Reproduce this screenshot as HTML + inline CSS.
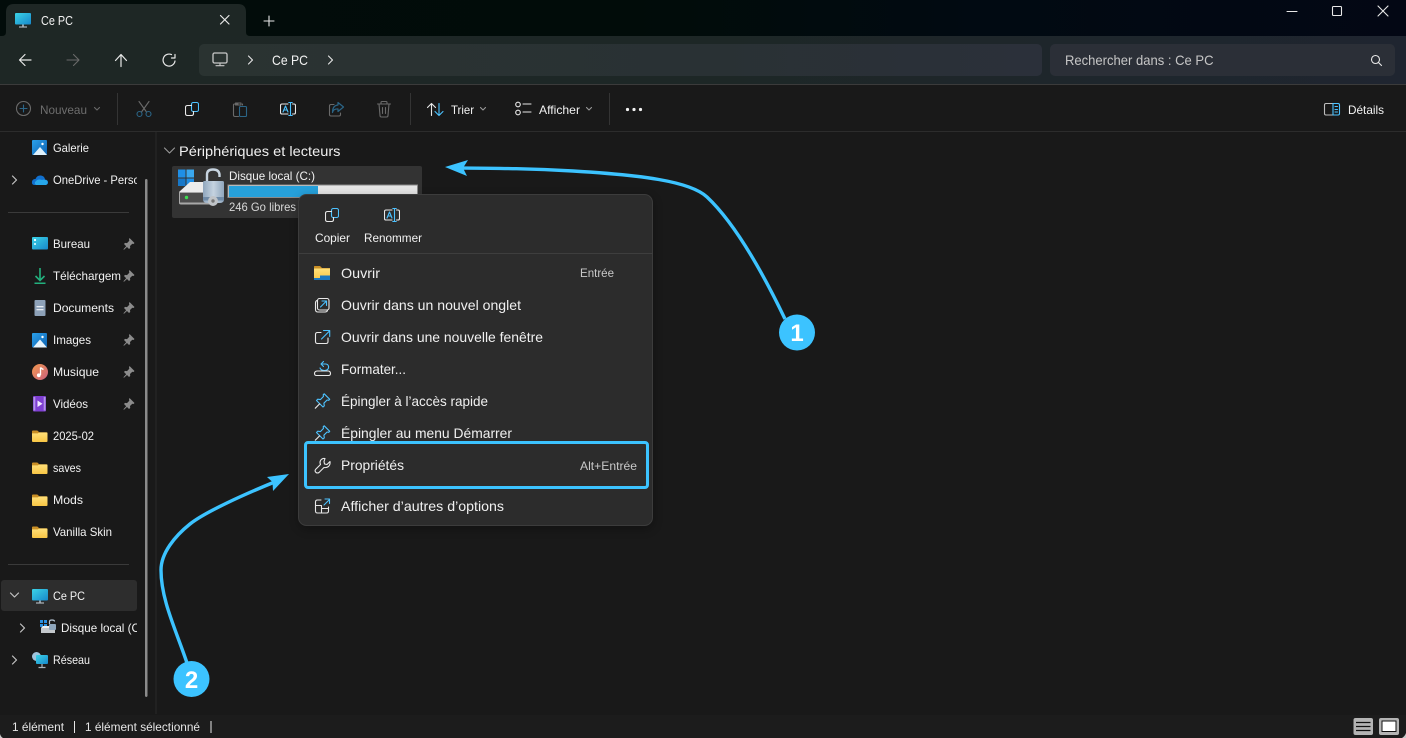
<!DOCTYPE html>
<html lang="fr"><head><meta charset="utf-8"><title>Ce PC</title>
<style>
html,body{margin:0;padding:0;background:#191919;width:1406px;height:738px;overflow:hidden}
svg{display:block}
text{font-family:"Liberation Sans",sans-serif;font-size:12px;fill:#f2f2f2}
.m{font-size:14px;fill:#f0f0f0}
.s{fill:#c9c9c9}
.i{fill:none;stroke:#e8e8e8;stroke-width:1.1;stroke-linecap:round;stroke-linejoin:round}
.b{fill:none;stroke:#4cc2ff;stroke-width:1.1;stroke-linecap:round;stroke-linejoin:round}
.d{fill:none;stroke:#6a6a6a;stroke-width:1.1;stroke-linecap:round;stroke-linejoin:round}
.db{fill:none;stroke:#2b6587;stroke-width:1.1;stroke-linecap:round;stroke-linejoin:round}
</style></head><body>
<svg xmlns="http://www.w3.org/2000/svg" width="1406" height="738" viewBox="0 0 1406 738">
<defs>
<linearGradient id="tb" x1="0" x2="1" y1="0" y2="0"><stop offset="0" stop-color="#020c0a"/><stop offset=".45" stop-color="#010c09"/><stop offset=".7" stop-color="#010a12"/><stop offset="1" stop-color="#030714"/></linearGradient>
<linearGradient id="nv" x1="0" x2="1" y1="0" y2="0"><stop offset="0" stop-color="#1e2725"/><stop offset=".5" stop-color="#1d2726"/><stop offset="1" stop-color="#1f2530"/></linearGradient>
<linearGradient id="ad" x1="0" x2="1" y1="0" y2="0"><stop offset="0" stop-color="#2a3331"/><stop offset=".6" stop-color="#293134"/><stop offset="1" stop-color="#2b303a"/></linearGradient>
<linearGradient id="scr" x1="0" x2="1" y1="0" y2="1"><stop offset="0" stop-color="#3bd3e6"/><stop offset="1" stop-color="#1788cc"/></linearGradient>
<linearGradient id="fo" x1="0" x2="0" y1="0" y2="1"><stop offset="0" stop-color="#ffe07a"/><stop offset="1" stop-color="#f8c544"/></linearGradient>
<linearGradient id="pic" x1="0" x2="1" y1="0" y2="1"><stop offset="0" stop-color="#2aa0ea"/><stop offset="1" stop-color="#0f62b0"/></linearGradient>
<linearGradient id="mus" x1="0" x2="1" y1="0" y2="1"><stop offset="0" stop-color="#f2994f"/><stop offset="1" stop-color="#c9607e"/></linearGradient>
<linearGradient id="lck" x1="0" x2="1" y1="0" y2="0"><stop offset="0" stop-color="#8fa6bd"/><stop offset=".5" stop-color="#c5d3e0"/><stop offset="1" stop-color="#8fa6bd"/></linearGradient>
<filter id="sh" x="-10%" y="-10%" width="120%" height="120%"><feGaussianBlur stdDeviation="5"/></filter>
<clipPath id="sc"><rect x="0" y="132" width="137" height="582"/></clipPath>
<symbol id="folder" viewBox="0 0 16 14" preserveAspectRatio="none">
<path d="M0 1.500Q0 .5 1 .5H5.500L7.500 2.500H15Q16 2.500 16 3.500V5H0Z" fill="#c98f26"/>
<path d="M0 3.800H6L7.500 2.800H15Q16 2.800 16 3.800V12.500Q16 13.500 15 13.500H1Q0 13.500 0 12.500Z" fill="url(#fo)"/>
</symbol>
<symbol id="pin" viewBox="0 0 12 12" width="12" height="12">
<path d="M6.500 0L11.500 5 10.500 6 9.300 5.700 7 8 7.200 10 6 11 4 9 1 11.800 .4 11.200 3.200 8.200 1 6 2 4.900 4 5.100 6.300 2.700 6 1.200Z" fill="#8c8c8c"/>
</symbol>
<symbol id="mon" viewBox="0 0 16 15" width="16" height="15">
<rect x="0" y="0" width="16" height="11.500" rx="1" fill="url(#scr)"/>
<rect x="7" y="11.500" width="2" height="2" fill="#8e9aa4"/>
<rect x="4" y="13.400" width="8" height="1.200" fill="#aeb6bc"/>
</symbol>
<symbol id="mpin" viewBox="0 0 16 16" width="16" height="16">
<path class="b" d="M9.700 .8L15.200 6.300 14.200 7.300 12.600 7 9.400 10.200 9.800 12.800 8.500 14 2 7.500 3.200 6.200 5.900 6.600 9 3.400 8.700 1.800Z"/>
<path class="i" d="M5.100 10.900L.8 15.200"/>
</symbol>
<symbol id="copy" viewBox="0 0 14 14" width="14" height="14">
<rect class="b" x="6.500" y=".5" width="7" height="9" rx="1.800"/>
<path class="i" d="M6.500 3.500H2.500Q.5 3.500 .5 5.500V11.500Q.5 13.500 2.500 13.500H6.500Q8.500 13.500 8.500 11.500V9.500"/>
</symbol>
<symbol id="ren" viewBox="0 0 16 14" width="16" height="14">
<path class="i" d="M8 2H2Q.5 2 .5 3.500V10.500Q.5 12 2 12H8M12.500 2H14Q15.500 2 15.500 3.500V10.500Q15.500 12 14 12H12.500"/>
<path class="b" d="M10.500 .5V13.500M8.800 .5H12.200M8.800 13.500H12.200"/>
<path class="b" d="M3 10L5.500 4 8 10M3.900 8H7.100"/>
</symbol>
</defs>

<!-- backgrounds -->
<rect width="1406" height="738" fill="#191919"/>
<rect width="1406" height="36" fill="url(#tb)"/>
<rect y="36" width="1406" height="48" fill="url(#nv)"/>
<rect y="84" width="1406" height="1" fill="#3b3b3b"/>
<rect y="131" width="1406" height="1" fill="#2c2c2c"/>
<rect x="155" y="132" width="2" height="582" fill="#212121"/>
<rect y="715" width="1406" height="23" fill="#1c1c1c"/>

<!-- tab -->
<path d="M0 36H2Q6 36 6 32V12Q6 4 14 4H238Q246 4 246 12V32Q246 36 250 36Z" fill="#1e2725"/>
<use href="#mon" x="15" y="13"/>
<text x="41" y="25" textLength="32" lengthAdjust="spacingAndGlyphs" style="font-size:13px">Ce PC</text>
<path class="i" style="stroke-width:1.200" d="M220.500 15.500L229 24M229 15.500L220.500 24"/>
<path class="i" d="M264 21H274M269 16V26"/>

<!-- window controls -->
<path d="M1287 11.500H1297" class="i"/>
<rect x="1332.500" y="6.500" width="9" height="9" rx="1" class="i"/>
<path class="i" d="M1378 6L1388 16M1388 6L1378 16"/>

<!-- nav -->
<path class="i" style="stroke-width:1.200" d="M31 60H20M25 54.500L19.500 60 25 65.500"/>
<path class="d" d="M67 60H78.500M73.500 54.500L79 60 73.500 65.500"/>
<path class="i" style="stroke-width:1.200" d="M121 66.500V55M115.500 60.500L121 54.500 126.500 60.500"/>
<path class="i" style="stroke-width:1.200" d="M171.500 54.600A6 6 0 1 0 175 61M175 54.500V58H171.500"/>
<rect x="199" y="44" width="843" height="32" rx="5" fill="url(#ad)"/>
<rect x="1050" y="44" width="345" height="32" rx="5" fill="#2b2f37"/>
<rect class="i" style="stroke:#c8c8c8;stroke-width:1.300" x="213" y="53" width="14" height="10" rx="1.500"/>
<path class="i" style="stroke:#c8c8c8" d="M220 63V65.500M216 65.700H224"/>
<path class="i" d="M248.500 56L252.500 60 248.500 64M328.500 56L332.500 60 328.500 64"/>
<text x="272" y="65" textLength="36" lengthAdjust="spacingAndGlyphs" style="font-size:14px">Ce PC</text>
<text x="1065" y="65" textLength="148.500" lengthAdjust="spacingAndGlyphs" style="font-size:14px;fill:#c6c6c6">Rechercher dans : Ce PC</text>
<circle class="i" cx="1375.500" cy="59.500" r="4"/><path class="i" d="M1378.500 62.500L1381.500 65.500"/>

<!-- toolbar -->
<circle class="d" cx="23.500" cy="108.500" r="7"/><path class="db" d="M23.500 105V112M20 108.500H27"/>
<text x="40" y="114" textLength="47" lengthAdjust="spacingAndGlyphs" style="fill:#6e6e6e">Nouveau</text>
<path class="d" d="M94.500 107.500L97 110 99.500 107.500"/>
<rect x="117" y="93" width="1" height="32" fill="#343434"/>
<path class="d" d="M139 101.500L146.500 112M149 101.500L141.500 112"/>
<circle class="db" cx="139.500" cy="114" r="2.500"/><circle class="db" cx="148.500" cy="114" r="2.500"/>
<use href="#copy" x="185" y="102"/>
<path class="d" d="M238 104H234.500Q233.500 104 233.500 105V115Q233.500 116.500 235 116.500H238.500M242.500 104V105M235.500 103H241V105H235.500Z"/>
<rect class="db" x="239.500" y="106.500" width="7" height="10" rx="1"/>
<use href="#ren" x="280" y="102"/>
<path class="d" d="M334 104.500H331Q329.500 104.500 329.500 106V114.500Q329.500 116 331 116H339Q340.500 116 340.500 114.500V113"/>
<path class="db" style="stroke-width:1.200" d="M338 102.500L343.500 107 338 111.500V109Q333.500 108.500 332.500 112.500 332.500 105.500 338 105Z"/>
<path class="d" d="M377.500 104H390.500M381 104V102.500Q381 101.500 382 101.500H386Q387 101.500 387 102.500V104M379 104L380 115.500Q380 117 381.500 117H386.500Q388 117 388 115.500L389 104M382.500 107.500V113.500M385.500 107.500V113.500"/>
<rect x="410" y="93" width="1" height="32" fill="#343434"/>
<path class="i" d="M431.500 115.500V103.500M427.500 107.500L431.500 103.500 435.500 107.500"/>
<path class="b" d="M439 103.500V115.500M435 111.500L439 115.500 443 111.500"/>
<text x="451" y="114" textLength="23" lengthAdjust="spacingAndGlyphs">Trier</text>
<path class="i" style="stroke:#9a9a9a" d="M480.500 107.500L483 110 485.500 107.500"/>
<circle class="i" cx="518" cy="104.500" r="2.300"/><circle class="i" cx="518" cy="112.500" r="2.300"/>
<path class="i" d="M523 104H531M523 112H531"/>
<text x="539" y="114" textLength="41" lengthAdjust="spacingAndGlyphs">Afficher</text>
<path class="i" style="stroke:#9a9a9a" d="M586.500 107.500L589 110 591.500 107.500"/>
<rect x="609" y="93" width="1" height="32" fill="#343434"/>
<circle cx="627.500" cy="109.500" r="1.600" fill="#f2f2f2"/><circle cx="634" cy="109.500" r="1.600" fill="#f2f2f2"/><circle cx="640.500" cy="109.500" r="1.600" fill="#f2f2f2"/>
<path class="i" style="stroke:#bdbdbd" d="M1333 103.500H1326Q1324.500 103.500 1324.500 105V113.500Q1324.500 115 1326 115H1333"/>
<path class="b" d="M1333 103.500H1338Q1339.500 103.500 1339.500 105V113.500Q1339.500 115 1338 115H1333ZM1335 106.500H1337.500M1335 109.500H1337.500M1335 112H1337.500"/>
<text x="1348" y="114" textLength="36" lengthAdjust="spacingAndGlyphs">Détails</text>

<!-- sidebar -->
<rect x="1" y="580" width="136" height="31" rx="3" fill="#2d2d2d"/>
<rect x="8" y="212" width="121" height="1" fill="#3a3a3a"/>
<rect x="8" y="564" width="121" height="1" fill="#3a3a3a"/>
<rect x="145" y="179" width="2.500" height="518" rx="1.200" fill="#8b8b8b"/>
<g clip-path="url(#sc)">
<text x="53" y="152" textLength="36" lengthAdjust="spacingAndGlyphs">Galerie</text>
<text x="53" y="184" textLength="108" lengthAdjust="spacingAndGlyphs">OneDrive - Personnel</text>
<text x="53" y="248" textLength="37" lengthAdjust="spacingAndGlyphs">Bureau</text>
<text x="53" y="280" textLength="68" lengthAdjust="spacingAndGlyphs">Téléchargem</text>
<text x="53" y="312" textLength="61" lengthAdjust="spacingAndGlyphs">Documents</text>
<text x="53" y="344" textLength="38" lengthAdjust="spacingAndGlyphs">Images</text>
<text x="53" y="376" textLength="46" lengthAdjust="spacingAndGlyphs">Musique</text>
<text x="53" y="408" textLength="35" lengthAdjust="spacingAndGlyphs">Vidéos</text>
<text x="53" y="440" textLength="41" lengthAdjust="spacingAndGlyphs">2025-02</text>
<text x="53" y="472" textLength="28" lengthAdjust="spacingAndGlyphs">saves</text>
<text x="53" y="504" textLength="30" lengthAdjust="spacingAndGlyphs">Mods</text>
<text x="53" y="536" textLength="59" lengthAdjust="spacingAndGlyphs">Vanilla Skin</text>
<text x="53" y="600" textLength="32" lengthAdjust="spacingAndGlyphs">Ce PC</text>
<text x="61" y="632" textLength="86" lengthAdjust="spacingAndGlyphs">Disque local (C:)</text>
<text x="53" y="664" textLength="37" lengthAdjust="spacingAndGlyphs">Réseau</text>
</g>
<use href="#pin" x="123" y="238"/><use href="#pin" x="123" y="270"/><use href="#pin" x="123" y="302"/><use href="#pin" x="123" y="334"/><use href="#pin" x="123" y="366"/><use href="#pin" x="123" y="398"/>
<path class="i" style="stroke:#c4c4c4;stroke-width:1.200" d="M12.500 176L16.500 180 12.500 184M20.500 624L24.500 628 20.500 632M12.500 656L16.500 660 12.500 664M10.500 593L14.500 597 18.500 593"/>
<!-- Galerie -->
<rect x="32" y="140" width="15" height="15" rx="1" fill="url(#pic)"/><path d="M33 155L40 147 47 155Z" fill="#dff1fb"/><circle cx="42.500" cy="144" r="1.200" fill="#fff"/>
<!-- OneDrive -->
<path d="M34 185Q31.500 184.500 32 181.500 32.500 179 35.500 179 37 175 41 175.500 44.500 176 45 179.500 48.500 180 48 183 47.500 185 45.500 185Z" fill="#1170cf"/><path d="M36 185Q33.500 183 36 181 38 178.500 42 180 44 179 47 180.500 49 183 46 185Z" fill="#28a8ea"/>
<!-- Bureau -->
<rect x="32" y="237" width="16" height="12.500" rx="1" fill="url(#scr)"/><rect x="34" y="239" width="2" height="2" fill="#e6fbff"/><rect x="34" y="243" width="2" height="2" fill="#bdf0f9"/>
<!-- Télécharg -->
<path d="M40 268V280M35.500 276L40 280.500 44.500 276" fill="none" stroke="#22b07d" stroke-width="1.600"/><rect x="34.500" y="282.500" width="11" height="1.500" fill="#22b07d"/>
<!-- Documents -->
<rect x="34.500" y="300" width="11" height="16" rx="1" fill="#8da1b8"/><rect x="36.500" y="306" width="7" height="1.300" fill="#e6ecf2"/><rect x="36.500" y="309" width="7" height="1.300" fill="#e6ecf2"/>
<!-- Images -->
<rect x="32" y="333" width="15" height="14.500" rx="1" fill="url(#pic)"/><path d="M33 347.500L40 339.500 47 347.500Z" fill="#e6f4fc"/><circle cx="42.500" cy="337" r="1.200" fill="#fff"/>
<!-- Musique -->
<circle cx="40" cy="372" r="8" fill="url(#mus)"/><path d="M40.500 367.500V375" stroke="#fff" stroke-width="1.300"/><path d="M40.500 367.500Q42 369 43.500 369.500" stroke="#fff" stroke-width="1.300" fill="none"/><circle cx="38.800" cy="375.300" r="1.900" fill="#fff"/>
<!-- Videos -->
<rect x="33" y="396" width="13" height="15.500" rx="1" fill="#7e3fd1"/><rect x="33.500" y="397" width="1.800" height="13.500" fill="#b394e8"/><rect x="43.700" y="397" width="1.800" height="13.500" fill="#b394e8"/><path d="M37.500 400.500L42.500 403.800 37.500 407Z" fill="#f2eaff"/>
<use href="#folder" x="32" y="430" width="15.500" height="12.500"/><use href="#folder" x="32" y="462" width="15.500" height="12.500"/><use href="#folder" x="32" y="494" width="15.500" height="12.500"/><use href="#folder" x="32" y="526" width="15.500" height="12.500"/>
<use href="#mon" x="32" y="589"/>
<!-- small disk -->
<rect x="40" y="620" width="3" height="3" fill="#2a8fe0"/><rect x="44" y="620" width="3" height="3" fill="#2a8fe0"/><rect x="40" y="624" width="3" height="3" fill="#2a8fe0"/><rect x="44" y="624" width="3" height="3" fill="#2a8fe0"/>
<path d="M41 628H55V633H41Z" fill="#c4c8cc"/><path d="M43 626H52V628H41Z" fill="#eee"/><path d="M49.500 624V621.500Q49.500 620 52 620T54.500 621.500" fill="none" stroke="#b8c6d4" stroke-width="1.200"/><rect x="49" y="624" width="7" height="6" rx="1" fill="#8ea5bb"/>
<!-- network -->
<circle cx="36.500" cy="656.500" r="4.500" fill="#9fc3dc"/><rect x="36" y="655" width="12" height="9" rx="1" fill="url(#scr)"/><path d="M42 664V667M38.500 667.500H45.500" stroke="#aab4bc" stroke-width="1.200"/>

<!-- content -->
<path class="i" style="stroke:#9a9a9a" d="M164.500 148L169.500 153 174.500 148"/>
<text class="m" x="179" y="156" textLength="161.500" lengthAdjust="spacingAndGlyphs">Périphériques et lecteurs</text>
<rect x="172" y="166" width="250" height="52" rx="2" fill="#333333"/>
<!-- big drive icon -->
<g>
<rect x="178" y="169.500" width="7.500" height="8" fill="#1f8fe6"/><rect x="186.500" y="169.500" width="7.500" height="8" fill="#3aa8ef"/><rect x="178" y="178.500" width="7.500" height="7.500" fill="#1878c8"/><rect x="186.500" y="178.500" width="7.500" height="7.500" fill="#1f8fe6"/>
<path d="M179 192L190 182H206V192Z" fill="#ececec"/>
<path d="M179 192H212V203Q212 204.500 210 204.500H181Q179 204.500 179 203Z" fill="#a8a8a8"/>
<path d="M180 193H211V202.500H180Z" fill="#4d4d4d"/>
<circle cx="186.500" cy="197.500" r="1.700" fill="#3ddc50"/>
<path d="M207 181V174.500Q207 169.500 213 169.500T219.500 174.500V177" fill="none" stroke="#c7d4e0" stroke-width="2.400"/>
<path d="M203 182.500Q203 181 204.500 181H222.500Q224 181 224 182.500V199Q224 203 220 203H207Q203 203 203 199Z" fill="url(#lck)"/>
<rect x="203" y="197" width="21" height="3.500" fill="#6f8aa6"/>
<circle cx="213" cy="201" r="5" fill="#c0c4c8"/><circle cx="213" cy="201" r="1.700" fill="#777"/>
</g>
<text x="229" y="180" textLength="86" lengthAdjust="spacingAndGlyphs">Disque local (C:)</text>
<rect x="228" y="185" width="189.500" height="12.500" fill="#e6e6e6" stroke="#8a8a8a" stroke-width="1"/>
<rect x="229" y="186" width="89" height="11" fill="#26a0da"/>
<text x="229" y="211" textLength="67" lengthAdjust="spacingAndGlyphs" style="fill:#d8d8d8">246 Go libres</text>

<!-- context menu -->
<rect x="299" y="197" width="354" height="332" rx="8" fill="#000" opacity=".3" filter="url(#sh)"/>
<rect x="298.500" y="194.500" width="354" height="331" rx="8" fill="#2c2c2c" stroke="#3c3c3c"/>
<rect x="299" y="253" width="354" height="1" fill="#3e3e3e"/>
<use href="#copy" x="325" y="208"/>
<use href="#ren" x="384" y="208"/>
<text x="315" y="242" textLength="35" lengthAdjust="spacingAndGlyphs">Copier</text>
<text x="364" y="242" textLength="58" lengthAdjust="spacingAndGlyphs">Renommer</text>

<path d="M314 266.500Q314 266 315 266H320L322 268H330V270H314Z" fill="#c98f26"/>
<path d="M314 268.500H330V280H314Z" fill="url(#fo)"/><path d="M320 275.500H330V280H314V278H320Z" fill="#1c78c0"/>
<text class="m" x="341" y="278" textLength="39" lengthAdjust="spacingAndGlyphs">Ouvrir</text>
<text class="s" x="580" y="277" textLength="34" lengthAdjust="spacingAndGlyphs">Entrée</text>

<path class="i" d="M317 300.500Q315.500 301 315.500 303V309.500Q315.500 312 318 312H325Q327 312 327.500 310.500"/>
<rect class="i" x="317.500" y="298.500" width="11.500" height="11.500" rx="2"/>
<path class="b" d="M320.500 307L326 301.500M322 301H326.500V305.500"/>
<text class="m" x="341" y="310" textLength="180" lengthAdjust="spacingAndGlyphs">Ouvrir dans un nouvel onglet</text>

<path class="i" d="M321 332.500H317.500Q315.500 332.500 315.500 334.500V341.500Q315.500 343.500 317.500 343.500H326Q328 343.500 328 341.500V338"/>
<path class="b" d="M321.500 339L329.500 331M323.500 330.500H329.700V336.500"/>
<text class="m" x="341" y="342" textLength="202" lengthAdjust="spacingAndGlyphs">Ouvrir dans une nouvelle fenêtre</text>

<path class="b" d="M321 364H326Q329 364.500 328.500 368M321 364L323.500 361.500M321 364L323.500 366.500M328.500 368Q327.500 370.500 324.500 370.500 321 370.500 320 368"/>
<path class="i" d="M317 371H328.500Q330.500 371.500 330.500 373.500 330.500 375.500 328.500 375.500H316.500Q314.500 375.500 314.500 373.500 314.500 371.500 317 371Z"/>
<text class="m" x="341" y="374" textLength="65" lengthAdjust="spacingAndGlyphs">Formater...</text>

<use href="#mpin" x="314.500" y="393"/>
<text class="m" x="341" y="406" textLength="147" lengthAdjust="spacingAndGlyphs">Épingler à l’accès rapide</text>
<use href="#mpin" x="314.500" y="425"/>
<text class="m" x="341" y="438" textLength="171" lengthAdjust="spacingAndGlyphs">Épingler au menu Démarrer</text>

<rect x="305.500" y="442.500" width="342" height="45" rx="2.500" fill="#2c2c2c" stroke="#3cc3ff" stroke-width="3"/>
<path class="i" d="M325 458.500Q322 458 320.500 460.500 319.500 462.500 320.500 464.500L315.500 469.500Q314.500 471 316 472.500 317.500 473.500 319 472.500L324 467.500Q326.500 468 328.500 466.500 330.500 464.500 330 461.500L327 464.500 324.500 464 324 461.500Z"/>
<text class="m" x="341" y="470" textLength="63" lengthAdjust="spacingAndGlyphs">Propriétés</text>
<text class="s" x="580" y="470" textLength="57" lengthAdjust="spacingAndGlyphs">Alt+Entrée</text>

<path class="i" d="M321 500H317.500Q315.500 500 315.500 502V505.500H321.500V513M315.500 505.500V511Q315.500 513 317.500 513H326.500Q328.500 513 328.500 511V507M321.500 508.500H328.500"/>
<path class="b" d="M324 505L329.500 499.500M325 499H329.500V503.500"/>
<text class="m" x="341" y="511" textLength="163" lengthAdjust="spacingAndGlyphs">Afficher d’autres d’options</text>

<!-- status bar -->
<text x="12" y="731" textLength="52" lengthAdjust="spacingAndGlyphs" style="fill:#e6e6e6">1 élément</text>
<rect x="74" y="721" width="1" height="12" fill="#e6e6e6"/>
<text x="85" y="731" textLength="115" lengthAdjust="spacingAndGlyphs" style="fill:#e6e6e6">1 élément sélectionné</text>
<rect x="210.500" y="721" width="1" height="12" fill="#e6e6e6"/>
<rect x="1353.500" y="718" width="19.500" height="17" rx="2" fill="#b4b4b4"/>
<path d="M1356 722.500H1370.500M1356 726.500H1370.500M1356 730.500H1370.500" stroke="#111" stroke-width="1.200"/>
<rect x="1379" y="718" width="20" height="17" rx="2" fill="#b4b4b4"/>
<rect x="1382" y="721" width="14" height="10.500" fill="#fff" stroke="#111"/>
<path d="M1406 738H1402Q1405 736 1406 733Z" fill="#c8c8c8"/>
<path d="M0 738H3Q1 737 0 734Z" fill="#c8c8c8"/>

<!-- annotations -->
<path d="M785 319C772 292 740 228 707 197C690 181 640 175 573 171C530 168.500 500 168.300 462 168" fill="none" stroke="#3cc3ff" stroke-width="3.400"/>
<path d="M445 167L468 160 463 168 467 176Z" fill="#3cc3ff"/>
<circle cx="797" cy="332.500" r="18" fill="#3cc3ff"/>
<text x="797" y="341" text-anchor="middle" style="font-size:24px;font-weight:bold;fill:#fff">1</text>
<path d="M187 663C176 630 161 600 161 570C161 553 175 536 190 524C205 512 245 494 277 481" fill="none" stroke="#3cc3ff" stroke-width="3.400"/>
<path d="M289 474L267 477 272.500 482 273 491Z" fill="#3cc3ff"/>
<circle cx="191.500" cy="679" r="18" fill="#3cc3ff"/>
<text x="191.500" y="688" text-anchor="middle" style="font-size:24px;font-weight:bold;fill:#fff">2</text>
</svg>
</body></html>
